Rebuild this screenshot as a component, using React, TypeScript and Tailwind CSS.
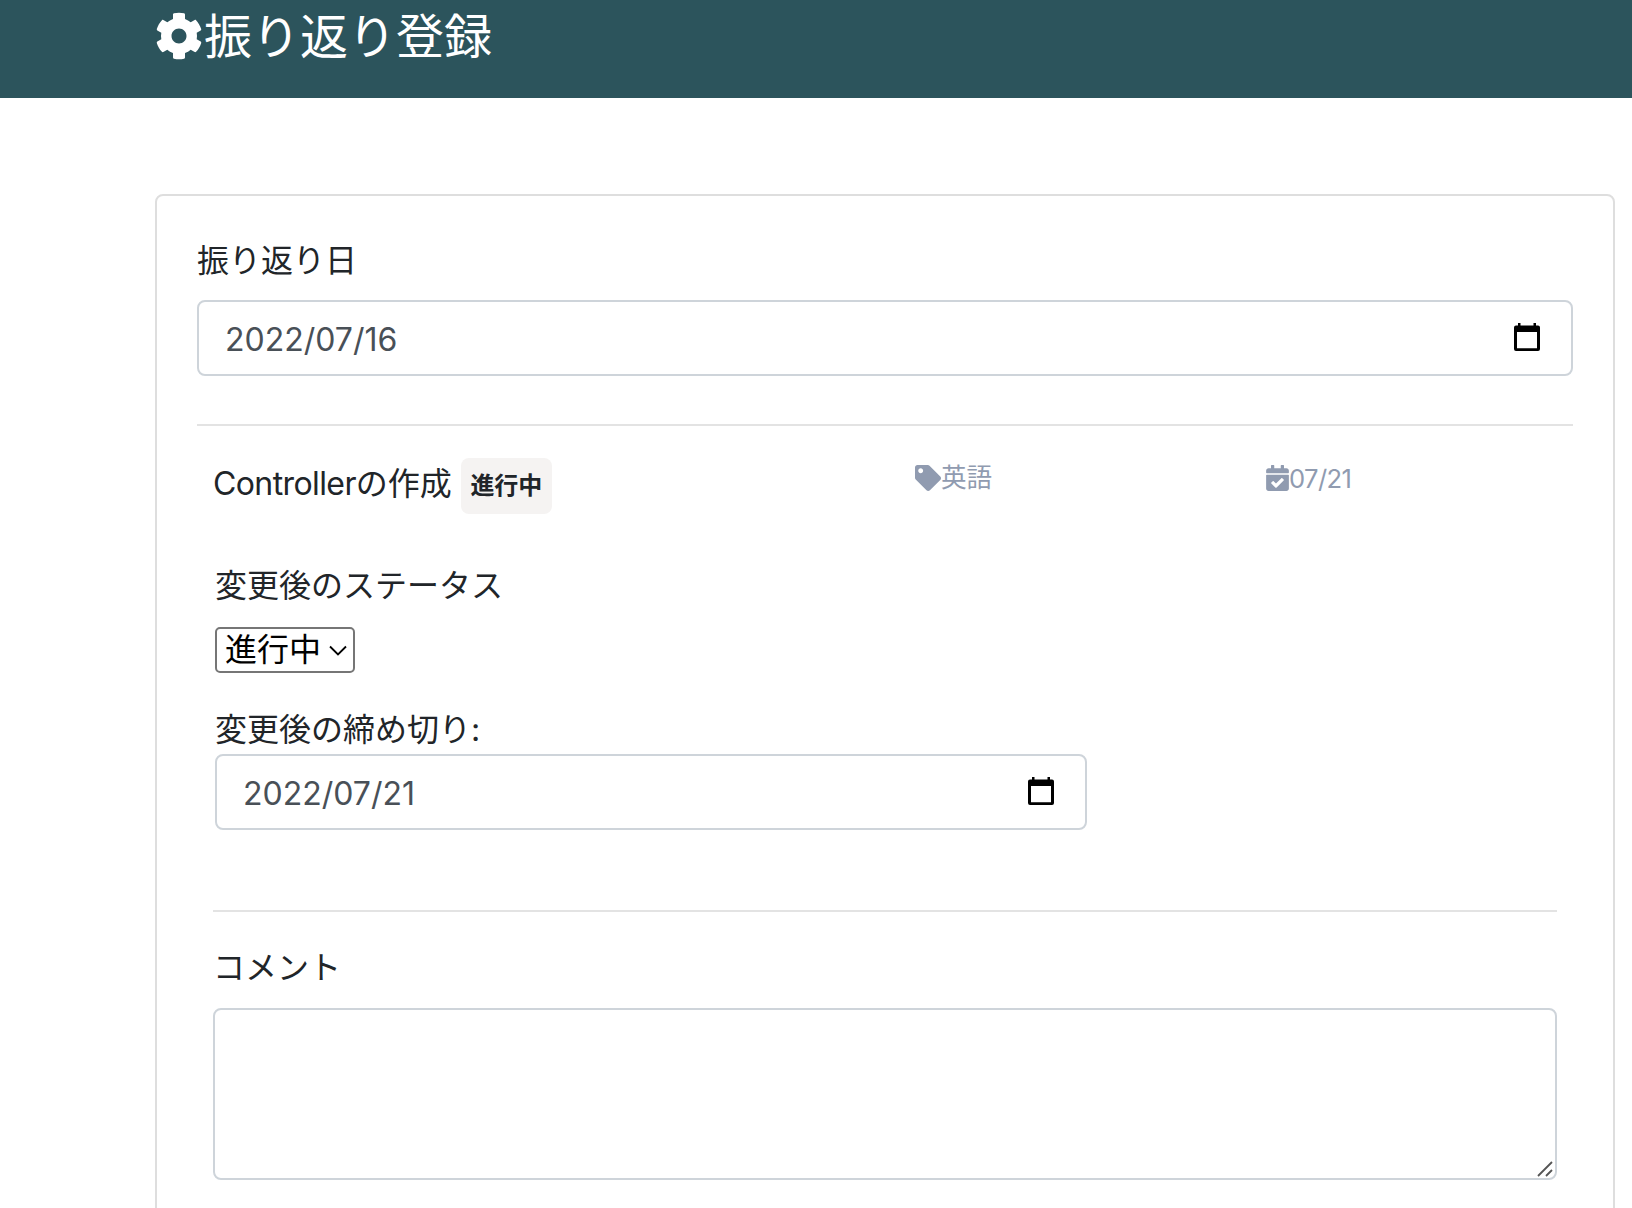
import React from "react";
import { FaCog, FaTag, FaCalendarCheck } from "react-icons/fa";

function CalendarIcon() {
  return (
    <svg viewBox="0 0 26 28" className="mb-0.5 h-7 w-[26px] shrink-0">
      <path
        fill="#000"
        fillRule="evenodd"
        d="M4 0h2.500v2.500h13V0H22v2.500h2a2 2 0 0 1 2 2V26a2 2 0 0 1-2 2H2a2 2 0 0 1-2-2V4.500a2 2 0 0 1 2-2h2zM3 9v16.300h20V9z"
      />
    </svg>
  );
}

function DateField({ value, className }: { value: string; className: string }) {
  return (
    <div
      className={
        "flex h-[76px] items-center justify-between rounded-lg border-2 border-[#ced4da] bg-white pl-[26px] pr-[31px] text-[#495057] " +
        className
      }
    >
      <span className="pt-[3px]">{value}</span>
      <CalendarIcon />
    </div>
  );
}

export default function App() {
  return (
    <div className="h-[1208px] w-[1632px] overflow-hidden bg-white font-['Inter','Noto_Sans_CJK_JP',sans-serif] text-[32px] leading-[48px] text-[#212529]">
      <header className="h-[98px] bg-[#2c545c] pl-[155px] text-white">
        <h1 className="flex h-[72px] items-center text-[48px] leading-[72px]">
          <FaCog className="size-12" />
          <span className="pt-px pl-px">振り返り登録</span>
        </h1>
      </header>

      <main className="mt-24 ml-[155px] h-[1100px] w-[1460px] rounded-lg border-2 border-[#dedede] p-10">
        <label className="block h-12 pt-px">振り返り日</label>
        <DateField value="2022/07/16" className="mt-4" />
        <hr className="mt-12 border-t-2 border-[#e3e3e3]" />

        <div className="px-4">
          <div className="flex h-[136px] pt-8">
            <div className="flex w-[702px] items-start">
              <span className="pt-0.5">
                <span className="tracking-[-0.6px]">Controller</span>の作成
              </span>
              <span className="ml-[9px] flex h-14 w-[91px] items-center justify-center rounded-lg bg-[#f5f3f2] text-2xl font-bold">
                進行中
              </span>
            </div>
            <div className="flex h-10 w-[351px] items-center text-[25.6px] leading-10 text-[#909bb0]">
              <FaTag className="size-[26px]" />
              <span>英語</span>
            </div>
            <div className="flex h-10 items-center text-[25.6px] leading-10 text-[#909bb0]">
              <FaCalendarCheck className="h-[26px] w-[23px]" />
              <span className="pt-px tracking-[-0.6px]">07/21</span>
            </div>
          </div>

          <div className="pl-0.5">
            <label className="block h-12">変更後のステータス</label>
            <div className="mt-[17px] flex h-[46px] w-[140px] items-center justify-between rounded-[5px] border-2 border-[#767676] pl-2 pr-[6px] text-black">
              <span>進行中</span>
              <svg viewBox="0 0 18 11" className="h-[11px] w-[18px]" fill="none">
                <path d="M1 1.500l8 8 8-8" stroke="#000" strokeWidth="1.800" />
              </svg>
            </div>
            <label className="mt-[33px] block h-12">変更後の締め切り:</label>
            <DateField value="2022/07/21" className="w-[872px]" />
          </div>

          <hr className="mt-20 border-t-2 border-[#e3e3e3]" />
          <label className="mt-8 block h-12">コメント</label>
          <div className="mt-4 flex h-[172px] items-end justify-end rounded-lg border-2 border-[#ced4da] px-[2px] pb-px">
            <svg viewBox="0 0 16 16" className="size-4" fill="none">
              <path d="M1 15L15 1M9 15l6-6" stroke="#555" strokeWidth="1.800" />
            </svg>
          </div>
        </div>
      </main>
    </div>
  );
}
